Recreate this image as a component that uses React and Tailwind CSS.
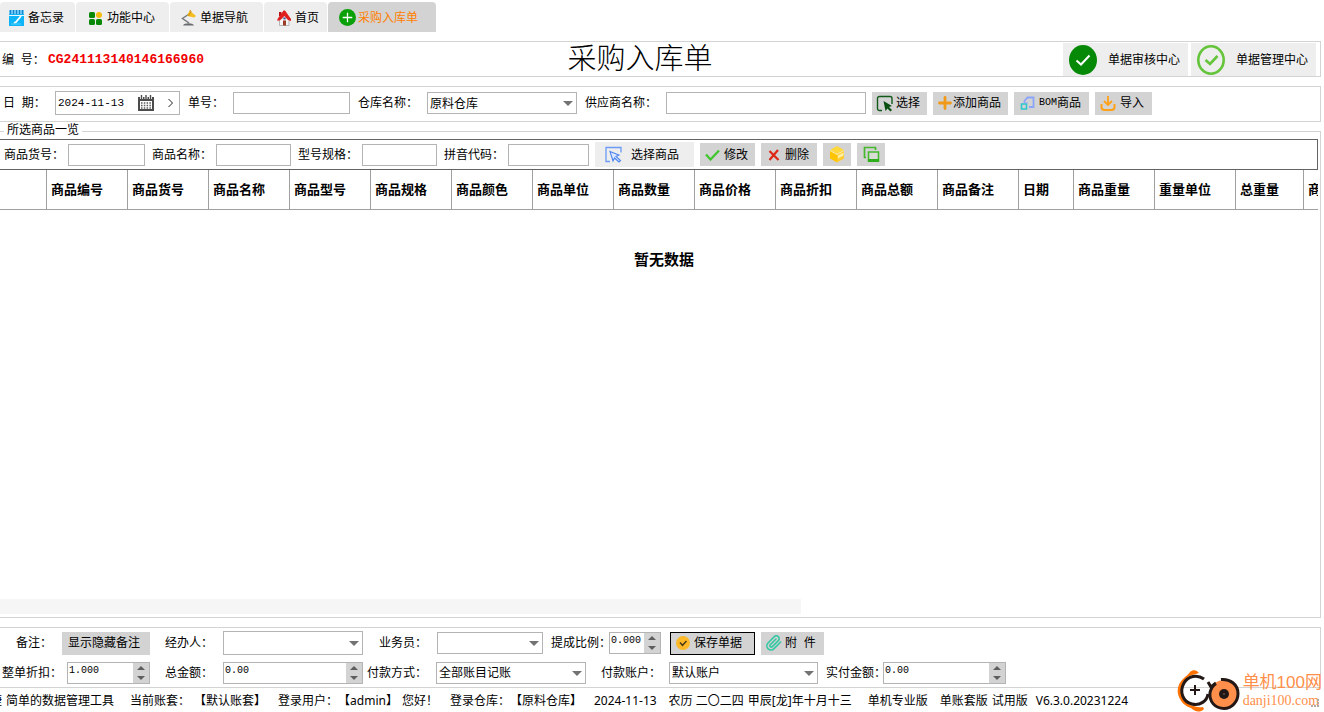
import { useState } from 'react';

const TABS = [
  { name: '备忘录', icon: MemoIcon, className: 'w-[75px] pl-2 gap-1' },
  { name: '功能中心', icon: ModulesIcon, className: 'w-[93px] pl-3 gap-[3px]' },
  { name: '单据导航', icon: LampIcon, className: 'w-[93px] pl-[11px] gap-[3px]' },
  { name: '首页', icon: HomeIcon, className: 'w-[63px] pl-3 gap-[3px]' },
  { name: '采购入库单', icon: PlusCircleIcon, className: 'w-[108px] pl-[11px] gap-[2px]' },
];

const COLUMNS = [
  { name: '', width: 'w-[46px]' },
  { name: '商品编号', width: 'w-20' },
  { name: '商品货号', width: 'w-20' },
  { name: '商品名称', width: 'w-20' },
  { name: '商品型号', width: 'w-20' },
  { name: '商品规格', width: 'w-20' },
  { name: '商品颜色', width: 'w-20' },
  { name: '商品单位', width: 'w-20' },
  { name: '商品数量', width: 'w-20' },
  { name: '商品价格', width: 'w-20' },
  { name: '商品折扣', width: 'w-20' },
  { name: '商品总额', width: 'w-20' },
  { name: '商品备注', width: 'w-20' },
  { name: '日期', width: 'w-[54px]' },
  { name: '商品重量', width: 'w-20' },
  { name: '重量单位', width: 'w-20' },
  { name: '总重量', width: 'w-[67px]' },
  { name: '商品产地', width: 'w-20' },
];

function MemoIcon() {
  return (
    <svg width="16" height="16" viewBox="0 0 16 16" className="shrink-0">
      <path d="M1 1h15v15H1z" fill="#0db4f7" />
      <path d="M1 0h15v4H1z" fill="#7fd6f8" />
      <path d="M2.500 0v4M5.500 0v4M8.500 0v4M11.500 0v4M14.500 0v4" stroke="#1583cc" strokeWidth="1.400" />
      <path d="M1 5.500h15" stroke="#e8f8ff" />
      <path d="M13 6l-5 6-2 1" stroke="#fff" strokeWidth="1.800" fill="none" />
      <path d="M3 14h10" stroke="#58d0ff" />
    </svg>
  );
}

function ModulesIcon() {
  return (
    <svg width="16" height="16" viewBox="0 0 16 16" className="shrink-0">
      <rect x="1" y="2" width="6" height="6" rx="1.500" fill="#078807" />
      <rect x="1" y="9" width="6" height="6" rx="1.500" fill="#078807" />
      <rect x="8" y="9" width="6" height="6" rx="1.500" fill="#078807" />
      <circle cx="11" cy="5" r="3" fill="#f2bd10" />
    </svg>
  );
}

function LampIcon() {
  return (
    <svg width="16" height="16" viewBox="0 0 16 16" className="shrink-0">
      <path d="M8 4L1.500 8.500 8 13" fill="none" stroke="#77797c" strokeWidth="1.500" />
      <path d="M2 15.500c1-3 10-3 11 0z" fill="#696b6e" />
      <path d="M8.500 0.500l6.500 5.500-2 1.500-6.500-1.500c0-2 1-3 2-5.500z" fill="#f5bd1f" />
      <path d="M9 0l1 1.500-2.500 4.500" stroke="#c98a12" fill="none" />
    </svg>
  );
}

function HomeIcon() {
  return (
    <svg width="16" height="16" viewBox="0 0 16 16" className="shrink-0">
      <path d="M3.500 8h9.500v7.500H3.500z" fill="#f4f4f4" stroke="#9b9b9b" strokeWidth=".7" />
      <path d="M3 2h2.500v4H3z" fill="#b41414" />
      <path d="M1.500 9l6-8.500h1.500L15 9v2l-3-1-3.700-4-3.800 4-3 1z" fill="#e01f1f" />
      <path d="M7 10.500h3v5H7z" fill="#9b3b26" />
      <path d="M7.500 7.500h2v2h-2z" fill="#3b5a9c" />
    </svg>
  );
}

function PlusCircleIcon() {
  return (
    <svg width="17" height="17" viewBox="0 0 16 16" className="shrink-0">
      <circle cx="8" cy="8" r="8" fill="#09a009" />
      <path d="M8 3.500v9M3.500 8h9" stroke="#fff" strokeWidth="1.200" />
    </svg>
  );
}

function CalendarIcon() {
  return (
    <svg width="16" height="16" viewBox="0 0 16 16">
      <path d="M0 2h16v14H0z" fill="#4c4c4c" />
      <path d="M2 6h12v8H2z" fill="#fff" />
      <path d="M3.500 0v4M8 0v4M12.500 0v4" stroke="#fff" strokeWidth="3" />
      <path d="M3.500 0v4M8 0v4M12.500 0v4" stroke="#4c4c4c" strokeWidth="1.400" />
      <path d="M3 8h10M3 10.500h10M3 13h10" stroke="#5a5a5a" strokeWidth="1.500" strokeDasharray="1.500 1.300" />
    </svg>
  );
}

function AuditIcon() {
  return (
    <svg width="28" height="30" viewBox="0 0 28 30" className="shrink-0">
      <ellipse cx="14" cy="15" rx="14" ry="15" fill="#068906" />
      <path d="M7.500 15.500l4.500 4 8.500-9" stroke="#fff" strokeWidth="2" fill="none" />
    </svg>
  );
}

function ManageIcon() {
  return (
    <svg width="28" height="30" viewBox="0 0 28 30" className="shrink-0">
      <ellipse cx="14" cy="15" rx="12.700" ry="13.700" fill="none" stroke="#64c43a" strokeWidth="2.600" />
      <path d="M8.500 15l4.500 4 7.500-8" stroke="#64c43a" strokeWidth="2.600" fill="none" />
    </svg>
  );
}

function PickIcon() {
  return (
    <svg width="17" height="17" viewBox="0 0 17 17" className="shrink-0">
      <path d="M6 15.500H3.500a2 2 0 0 1-2-2v-10a2 2 0 0 1 2-2H14a2 2 0 0 1 2 2V9" fill="none" stroke="#135b1b" strokeWidth="1.400" />
      <path d="M7.500 6l8.500 5-3 1 3 3-1.500 1.500-3-3L9.500 16z" fill="#0a4f12" />
    </svg>
  );
}

function AddIcon() {
  return (
    <svg width="14" height="14" viewBox="0 0 14 14" className="shrink-0">
      <path d="M7 1.500v11M1.500 7h11" stroke="#f09a1a" strokeWidth="2.800" strokeLinecap="round" />
    </svg>
  );
}

function BomIcon() {
  return (
    <svg width="15" height="15" viewBox="0 0 15 15" className="shrink-0">
      <path d="M4.500 7V5l3-3.500h6v9.500H9" fill="none" stroke="#8aa5fb" strokeWidth="1.800" />
      <path d="M1.500 8h5v5h-5z" fill="none" stroke="#2cc6cf" strokeWidth="1.600" />
      <path d="M6 8l1.500-2" stroke="#7c9cff" />
    </svg>
  );
}

function ImportIcon() {
  return (
    <svg width="16" height="16" viewBox="0 0 16 16" className="shrink-0">
      <path d="M8 1v9M4 6l4 4 4-4" fill="none" stroke="#ffa117" strokeWidth="1.800" />
      <path d="M1.500 9v3c0 2 1 3 3 3h7c2 0 3-1 3-3V9" fill="none" stroke="#ffa117" strokeWidth="2" />
    </svg>
  );
}

function SelectGoodsIcon() {
  return (
    <svg width="17" height="17" viewBox="0 0 17 17" className="shrink-0">
      <path d="M5 15.500H1v-14h15v5" fill="none" stroke="#6b9bf5" strokeWidth="1.300" />
      <path d="M5 5.500l9 3.500-3 1.500 4.500 4-1.500 1.500-4.500-4L8 15z" fill="#dce8ff" stroke="#4c83ee" strokeWidth="1.100" />
    </svg>
  );
}

function CheckIcon() {
  return (
    <svg width="15" height="12" viewBox="0 0 15 12" className="shrink-0">
      <path d="M1 5.500l4.500 5L14 1.500" fill="none" stroke="#3fc62c" strokeWidth="2.200" />
    </svg>
  );
}

function CrossIcon() {
  return (
    <svg width="12" height="12" viewBox="0 0 12 12" className="shrink-0">
      <path d="M1.500 2l9 9M10 1l-8.500 10" stroke="#dc2a17" strokeWidth="2.200" />
    </svg>
  );
}

function BoxIcon() {
  return (
    <svg width="16" height="17" viewBox="0 0 16 17">
      <path d="M8 0l7 4-7 4-7-4z" fill="#ffd83b" />
      <path d="M1 4.500l7 4V16.500L1 12.500z" fill="#ffc400" />
      <path d="M15 4.500l-7 4V16.500l7-4z" fill="#ffcb2e" />
      <path d="M14.500 6.500v3L9 12.500v-3z" fill="#fff0a8" />
      <path d="M1 4.500l7 4 7-4" fill="none" stroke="#fff2b0" strokeWidth=".8" />
    </svg>
  );
}

function CopyIcon() {
  return (
    <svg width="17" height="17" viewBox="0 0 17 17">
      <path d="M1.500 12V1.500h11V4M1 11.500h2" fill="none" stroke="#45b82e" strokeWidth="1.700" />
      <path d="M5.500 6h10v9h-10z" fill="#d8ddd6" stroke="#45b82e" strokeWidth="1.600" />
      <path d="M5 14.500h11" stroke="#2fae1b" strokeWidth="3" />
    </svg>
  );
}

function SaveIcon() {
  return (
    <svg width="14" height="14" viewBox="0 0 14 14" className="shrink-0">
      <circle cx="7" cy="7" r="7" fill="#fdb927" />
      <path d="M4 6.500l2.500 2.800L10.500 5" fill="none" stroke="#4b3b1a" strokeWidth="1.500" />
    </svg>
  );
}

function ClipIcon() {
  return (
    <svg width="16" height="16" viewBox="0 0 24 24" fill="none" className="shrink-0">
      <path
        d="M22 10.500l-10 10a6 6 0 0 1-9-8.500l9.500-9.500a4.200 4.200 0 0 1 6 6L9.500 17.500a2 2 0 0 1-3-3L15 6"
        stroke="#35c8a4"
        strokeWidth="2.400"
        strokeLinecap="round"
      />
    </svg>
  );
}

function SiteLogo() {
  return (
    <svg width="64" height="42" viewBox="0 0 64 42" className="shrink-0">
      <path d="M22 3c-2-3-6-4-9-1-1 2-3 3-5 5C1 13-1 20 2 27c2 5 6 9 12 11 4 4 9 5 13 1l-1-2c-5 1-10-1-14-3C6 30 3 25 4 19 5 12 9 7 15 5c3-1 5-1 7-2z" fill="#ff7100" />
      <path d="M27 9C20 4 11 6 7 13c-5 9-1 19 8 21 8 2 15-3 16-10" fill="none" stroke="#231815" strokeWidth="3" />
      <path d="M18 15v10M13 20h10" stroke="#231815" strokeWidth="2" />
      <path d="M31 12l3 5 5-4" fill="none" stroke="#231815" strokeWidth="3" />
      <circle cx="47" cy="24" r="14" fill="#ff8f4a" />
      <path d="M44 9.500c9-1 17 5 17 14 0 8-6 15-14 15-9 0-15-7-14-16 1-4 3-7 6-9" fill="none" stroke="#231815" strokeWidth="3" />
      <circle cx="47" cy="24" r="5" fill="#231815" />
      <circle cx="47" cy="24" r="1" fill="#5c504c" />
    </svg>
  );
}

function TextField({ id, label, labelClass, inputClass }) {
  return (
    <div className="flex items-center">
      <label htmlFor={id} className={`shrink-0 whitespace-nowrap ${labelClass}`}>{label}</label>
      <input id={id} type="text" className={`h-[22px] border border-[#b4b4b4] bg-white px-1 outline-none ${inputClass}`} />
    </div>
  );
}

function SelectField({ id, label, labelClass, selectClass, options }) {
  return (
    <div className="flex items-center">
      <label htmlFor={id} className={`shrink-0 whitespace-nowrap ${labelClass}`}>{label}</label>
      <div className={`relative ${selectClass}`}>
        <select id={id} className="block h-full w-full appearance-none border border-[#b4b4b4] bg-white pl-[2px] pr-4 pt-px outline-none">
          {options.map(o => <option key={o}>{o}</option>)}
        </select>
        <svg width="10" height="5" viewBox="0 0 10 5" className="pointer-events-none absolute right-1 top-1/2 -mt-[2px]">
          <path d="M0 0h10L5 5z" fill="#737373" />
        </svg>
      </div>
    </div>
  );
}

function SpinField({ id, label, labelClass, boxClass, initial, digits }) {
  const [value, setValue] = useState(initial);

  const step = amount => {
    setValue((Number(value) + amount).toFixed(digits));
  };

  return (
    <div className="flex items-center">
      <label htmlFor={id} className={`shrink-0 whitespace-nowrap ${labelClass}`}>{label}</label>
      <div className={`flex h-[22px] border border-[#b4b4b4] ${boxClass}`}>
        <input
          id={id}
          type="text"
          value={value}
          onChange={e => setValue(e.target.value)}
          className="min-w-0 flex-1 bg-white pb-1 pl-px font-['Liberation_Mono','Noto_Sans_CJK_SC',monospace] text-[10px] outline-none"
        />
        <div className="flex w-4 shrink-0 flex-col bg-[#d3d3d3]">
          <button type="button" aria-label="增加" onClick={() => step(1)} className="flex flex-1 items-center justify-center">
            <svg width="8" height="4" viewBox="0 0 8 4"><path d="M0 4h8L4 0z" fill="#5e5e5e" /></svg>
          </button>
          <button type="button" aria-label="减少" onClick={() => step(-1)} className="flex flex-1 items-center justify-center">
            <svg width="8" height="4" viewBox="0 0 8 4"><path d="M0 0h8L4 4z" fill="#5e5e5e" /></svg>
          </button>
        </div>
      </div>
    </div>
  );
}

function ToolButton({ className, children, ...rest }) {
  return (
    <button type="button" className={`flex h-[23px] shrink-0 items-center whitespace-nowrap bg-[#d3d3d3] ${className}`} {...rest}>
      {children}
    </button>
  );
}

function App() {
  const [active, setActive] = useState('采购入库单');
  const [date, setDate] = useState('2024-11-13');

  return (
    <div className="relative flex min-h-screen flex-col overflow-hidden bg-white font-['Liberation_Sans','Noto_Sans_CJK_SC',sans-serif] text-xs leading-4 text-black">
      {/* Tabs */}
      <nav className="flex gap-px pt-[2px]">
        {TABS.map(({ name, icon: Icon, className }) => (
          <button
            key={name}
            type="button"
            onClick={() => setActive(name)}
            className={`flex h-[30px] items-center whitespace-nowrap rounded-t pt-px ${className} ${active === name ? 'bg-[#d3d3d3] text-[#ff8000]' : 'bg-[#eeeeee]'}`}
          >
            <Icon />
            {name}
          </button>
        ))}
      </nav>

      <div className="flex flex-1 flex-col pr-[3px]">
        {/* Title bar */}
        <header className="mt-[9px] flex items-center border-y border-r border-[#d3d3d3]">
          <div className="flex w-[43%] items-center pl-[2px] pt-[2px]">
            <span className="w-[46px] whitespace-pre">编  号：</span>
            <span className="font-['Liberation_Mono',monospace] text-[13px] font-bold text-[#f00000]">CG241113140146166960</span>
          </div>
          <h1 className="whitespace-nowrap text-[29px] font-light leading-8">采购入库单</h1>
          <div className="ml-auto flex gap-[3px] pr-1 pt-px">
            <button type="button" className="flex h-[33px] w-[125px] items-center gap-[11px] bg-[#eeeeee] pl-[6px]">
              <AuditIcon />
              单据审核中心
            </button>
            <button type="button" className="flex h-[33px] w-[125px] items-center gap-[11px] bg-[#eeeeee] pl-[6px]">
              <ManageIcon />
              单据管理中心
            </button>
          </div>
        </header>

        {/* Order info */}
        <section className="mt-[9px] flex items-center gap-1.5 border-y border-r border-[#d3d3d3] pb-[6px] pl-[3px] pt-1">
          <div className="flex items-center gap-2">
            <div className="flex items-center">
              <label htmlFor="date" className="w-[52px] whitespace-pre">日  期：</label>
              <div className="flex h-6 w-[125px] items-center border border-[#b4b4b4]">
                <input
                  id="date"
                  type="text"
                  value={date}
                  onChange={e => setDate(e.target.value)}
                  className="w-[82px] pl-[2px] font-['Liberation_Mono',monospace] text-[11px] outline-none"
                />
                <button type="button" aria-label="选择日期"><CalendarIcon /></button>
                <button type="button" aria-label="后一天" className="ml-[14px]">
                  <svg width="5" height="8" viewBox="0 0 5 8"><path d="M.5 0l4 4-4 4" fill="none" stroke="#222" /></svg>
                </button>
              </div>
            </div>
            <TextField id="orderNo" label="单号：" labelClass="w-[45px]" inputClass="w-[117px]" />
            <SelectField id="warehouse" label="仓库名称：" labelClass="w-[69px]" selectClass="h-[22px] w-[150px]" options={['原料仓库']} />
            <TextField id="supplier" label="供应商名称：" labelClass="w-[81px]" inputClass="w-[200px]" />
          </div>
          <ToolButton className="w-[55px] gap-[3px] pl-1"><PickIcon />选择</ToolButton>
          <ToolButton className="w-[75px] gap-px pl-[5px]"><AddIcon />添加商品</ToolButton>
          <ToolButton className="w-[75px] gap-1 pl-[6px]">
            <BomIcon />
            <span className="flex items-center">
              <span className="font-['Liberation_Mono',monospace] text-[10px]">BOM</span>
              <span>商品</span>
            </span>
          </ToolButton>
          <ToolButton className="w-[57px] gap-1 pl-[5px]"><ImportIcon />导入</ToolButton>
        </section>

        {/* Selected goods */}
        <section aria-labelledby="goodsTitle" className="mt-px flex flex-1 flex-col">
          <div className="flex h-4">
            <div className="mt-2 w-1 border-t border-[#d3d3d3]" />
            <h2 id="goodsTitle" className="px-[3px] leading-[14px]">所选商品一览</h2>
            <div className="mt-2 flex-1 border-r border-t border-[#d3d3d3]" />
          </div>
          <div className="flex flex-1 flex-col border-b border-r border-[#d3d3d3] pr-[2px]">
            <div className="flex items-center gap-1.5 border-y border-r border-[#646464] py-[2px] pl-1">
              <div className="flex items-center gap-[7px]">
                <TextField id="goodsNo" label="商品货号：" labelClass="w-16" inputClass="w-[77px]" />
                <TextField id="goodsName" label="商品名称：" labelClass="w-16" inputClass="w-[75px]" />
                <TextField id="goodsSpec" label="型号规格：" labelClass="w-16" inputClass="w-[75px]" />
                <TextField id="pinyin" label="拼音代码：" labelClass="w-16" inputClass="w-[81px]" />
              </div>
              <button type="button" className="flex h-[25px] w-[99px] items-center gap-[9px] bg-[#eeeeee] pl-[10px]">
                <SelectGoodsIcon />
                选择商品
              </button>
              <ToolButton className="w-[55px] gap-1 pl-[5px]"><CheckIcon />修改</ToolButton>
              <ToolButton className="w-[56px] gap-[5px] pl-[7px]"><CrossIcon />删除</ToolButton>
              <ToolButton className="w-7 justify-center" aria-label="库存"><BoxIcon /></ToolButton>
              <ToolButton className="w-7 justify-center" aria-label="复制"><CopyIcon /></ToolButton>
            </div>

            {/* columns past the right edge are clipped, w-0 + min-w-full keeps them from widening the page */}
            <div className="w-0 min-w-full overflow-hidden">
              <table className="w-max border-collapse">
                <thead>
                  <tr className="h-[39px]">
                    {COLUMNS.map(col => (
                      <th key={col.name} className="border-b border-r border-[#a0a0a0] p-0 text-left text-[13px]">
                        <div className={`whitespace-nowrap pl-1 pt-px ${col.width}`}>{col.name}</div>
                      </th>
                    ))}
                  </tr>
                </thead>
              </table>
            </div>
            <p className="mt-10 pl-[10px] text-center text-[15px] font-bold leading-5">暂无数据</p>
            <div className="mb-[3px] mt-auto h-[15px] w-[801px] bg-[#f6f6f6]" />
          </div>
        </section>

        {/* Settlement */}
        <section className="mt-[9px] flex flex-col gap-[5px] border-y border-r border-[#d3d3d3] pb-[3px] pt-[3px]">
          <div className="flex h-6 items-center pl-4">
            <span className="w-[46px]">备注：</span>
            <ToolButton className="w-[88px] pl-[6px]">显示隐藏备注</ToolButton>
            <SelectField id="handler" label="经办人：" labelClass="ml-[15px] w-[58px]" selectClass="h-6 w-[140px]" options={['']} />
            <SelectField id="salesman" label="业务员：" labelClass="ml-4 w-[58px]" selectClass="h-[22px] w-[106px]" options={['']} />
            <SpinField id="ratio" label="提成比例：" labelClass="ml-2 w-[58px]" boxClass="w-[52px]" initial="0.000" digits={3} />
            <ToolButton className="ml-[9px] w-[85px] gap-1 border border-black pl-[5px]"><SaveIcon />保存单据</ToolButton>
            <ToolButton className="ml-1.5 w-[63px] gap-[3px] pl-[5px]"><ClipIcon /><span className="whitespace-pre">附  件</span></ToolButton>
          </div>
          <div className="flex h-6 items-center pl-[2px] pt-px">
            <SpinField id="discount" label="整单折扣：" labelClass="w-[65px]" boxClass="w-[83px]" initial="1.000" digits={3} />
            <SpinField id="total" label="总金额：" labelClass="ml-[15px] w-[58px]" boxClass="w-[140px]" initial="0.00" digits={2} />
            <SelectField id="payType" label="付款方式：" labelClass="ml-1 w-[69px]" selectClass="h-[22px] w-[150px]" options={['全部账目记账']} />
            <SelectField id="account" label="付款账户：" labelClass="ml-[15px] w-[68px]" selectClass="h-[22px] w-[149px]" options={['默认账户']} />
            <SpinField id="paid" label="实付金额：" labelClass="ml-2 w-[57px]" boxClass="w-[123px]" initial="0.00" digits={2} />
          </div>
        </section>
      </div>

      {/* Status bar */}
      <footer className="flex h-6 items-center whitespace-pre pt-[2px] font-['Noto_Sans','Noto_Sans_CJK_SC',sans-serif]">
        <span className="flex w-[2px] justify-end overflow-hidden">捷</span>
        <span className="ml-1">简单的数据管理工具</span>
        <span className="ml-4">当前账套：</span>
        <span className="ml-1">【默认账套】</span>
        <span className="ml-3">登录用户：</span>
        <span>【admin】</span>
        <span className="ml-1">您好！</span>
        <span className="ml-3">登录仓库：</span>
        <span>【原料仓库】</span>
        <span className="ml-3">2024-11-13</span>
        <span className="ml-3">农历 二〇二四</span>
        <span className="ml-1">甲辰[龙]年十月十三</span>
        <span className="ml-4">单机专业版</span>
        <span className="ml-3">单账套版</span>
        <span className="ml-1">试用版</span>
        <span className="ml-2">V6.3.0.20231224</span>
      </footer>

      {/* Site mark, lies over the bottom corner */}
      <div className="absolute bottom-0 right-0 flex items-center pr-[2px] text-[#ff8f4a]">
        <SiteLogo />
        <div className="ml-[2px] whitespace-nowrap">
          <div className="text-[17px] leading-5">单机100网</div>
          <div className="font-['Liberation_Serif',serif] text-sm leading-4">danji100.com</div>
        </div>
        <svg width="9" height="9" viewBox="0 0 9 9" className="absolute bottom-1 right-1">
          <path d="M6 0h2v2H6zM3 6h2v2H3zM0 6h2v2H0zM6 3h2v2H6zM6 6h2v2H6z" fill="#b0a8a2" />
        </svg>
      </div>
    </div>
  );
}

export default App;
